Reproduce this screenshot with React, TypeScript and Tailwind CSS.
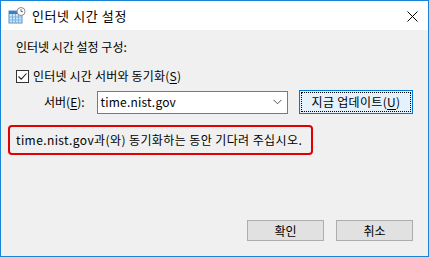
import React from "react";

const font = { fontFamily: '"Noto Sans CJK KR", "Noto Sans", sans-serif' };

function AppIcon() {
  return (
    <svg width="18" height="18" viewBox="0 0 18 18">
      <rect x="1" y="4" width="13" height="12" fill="#cfe6f7" stroke="#5a8fc0" strokeWidth="1" />
      <rect x="1" y="4" width="13" height="3" fill="#3b7fc4" />
      <g stroke="#7fb3df" strokeWidth="1">
        <line x1="4.5" y1="7" x2="4.5" y2="16" />
        <line x1="7.5" y1="7" x2="7.5" y2="16" />
        <line x1="10.5" y1="7" x2="10.5" y2="16" />
        <line x1="1" y1="10" x2="14" y2="10" />
        <line x1="1" y1="13" x2="14" y2="13" />
      </g>
      <circle cx="13" cy="4.5" r="4" fill="#ffffff" stroke="#8a8a8a" strokeWidth="1" />
      <path d="M13 2.2 V4.6 H14.8" stroke="#555" strokeWidth="0.9" fill="none" />
    </svg>
  );
}

function U({ children }: { children: React.ReactNode }) {
  return <span className="underline underline-offset-2">{children}</span>;
}

export default function App() {
  return (
    <div
      className="w-[429px] h-[257px] border border-[#1883d7] flex flex-col bg-[#f0f0f0] text-[12px] text-black overflow-hidden"
      style={font}
    >
      <div className="h-[29px] bg-white flex items-center shrink-0">
        <div className="ml-[7px] mt-[1px]">
          <AppIcon />
        </div>
        <span className="ml-[6px] text-[13px] leading-none tracking-[0.6px]">인터넷 시간 설정</span>
        <div className="ml-auto mr-[10px] mt-[1px]">
          <svg width="11" height="11" viewBox="0 0 11 11">
            <path d="M0.5 0.5 L10.5 10.5 M10.5 0.5 L0.5 10.5" stroke="#000" strokeWidth="1" />
          </svg>
        </div>
      </div>

      <div className="flex-1 flex flex-col pl-[15px] pr-[15px] pb-[15px]">
        <div className="mt-[9px] h-[16px] leading-[16px]">인터넷 시간 설정 구성:</div>

        <div className="mt-[13px] flex items-center h-[16px]">
          <div className="w-[13px] h-[13px] border border-[#333] bg-white flex items-center justify-center">
            <svg width="11" height="11" viewBox="0 0 11 11">
              <path d="M1.5 5.5 L4.2 8.2 L9.5 2.5" stroke="#222" strokeWidth="1.1" fill="none" />
            </svg>
          </div>
          <span className="ml-[4px] leading-[16px] tracking-[0.2px]">
            인터넷 시간 서버와 동기화(<U>S</U>)
          </span>
        </div>

        <div className="mt-[6px] flex items-center h-[24px]">
          <span className="ml-[28px] w-[53px] leading-[16px]">
            서버(<U>E</U>):
          </span>
          <div className="w-[193px] h-[23px] border border-[#7a7a7a] bg-white flex items-center">
            <span className="ml-[3px] leading-[16px] tracking-[0.2px]">time.nist.gov</span>
            <svg className="ml-auto mr-[5px]" width="9" height="6" viewBox="0 0 9 6">
              <path d="M0.5 0.8 L4.5 4.8 L8.5 0.8" stroke="#555" strokeWidth="1" fill="none" />
            </svg>
          </div>
          <div className="ml-[11px] w-[115px] h-[24px] border border-[#0078d7] bg-[#e5f1fb] p-[1px]">
            <div className="w-full h-full border border-dotted border-black flex items-center justify-center leading-[16px] tracking-[0.3px]">
              지금 업데이트(<U>U</U>)
            </div>
          </div>
        </div>

        <div className="mt-[11px] -ml-[8px] w-[305px] h-[30px] border-2 border-[#e00000] rounded-[4px] flex items-center pl-[6px] leading-[16px] tracking-[0.4px]">
          time.nist.gov과(와) 동기화하는 동안 기다려 주십시오.
        </div>

        <div className="mt-auto flex justify-end gap-[12px]">
          <div className="w-[77px] h-[21px] border border-[#adadad] bg-[#e1e1e1] flex items-center justify-center leading-[16px]">
            확인
          </div>
          <div className="w-[77px] h-[21px] border border-[#adadad] bg-[#e1e1e1] flex items-center justify-center leading-[16px]">
            취소
          </div>
        </div>
      </div>
    </div>
  );
}
